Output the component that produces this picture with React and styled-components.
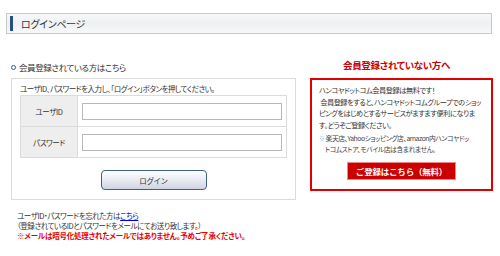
import React from "react";
import styled, { createGlobalStyle } from "styled-components";

const GlobalStyle = createGlobalStyle`
  body {
    margin: 0;
    background: #fff;
    font-family: "Noto Sans CJK JP", "Noto Sans", sans-serif;
    font-feature-settings: "palt";
    color: #333;
  }
`;

const Page = styled.div`
  width: 500px;
  height: 256px;
  padding-top: 13px;
  box-sizing: border-box;
  overflow: hidden;
`;

const PageHeader = styled.div`
  margin-left: 6px;
  width: 486px;
  height: 21px;
  box-sizing: border-box;
  border: 1px solid #c9c9c9;
  background: linear-gradient(#f7f8f9, #eef0f1 50%, #f6f8f9);
  display: flex;
  align-items: center;
  padding-left: 3px;
`;

const Accent = styled.span`
  width: 3px;
  height: 15px;
  background: #27507e;
  margin-right: 8px;
`;

const HeaderTitle = styled.h1`
  margin: 0;
  font-size: 10px;
  font-weight: normal;
  color: #2c3a4a;
  letter-spacing: -0.3px;
`;

const Columns = styled.div`
  display: grid;
  grid-template-columns: 285px 183px;
  column-gap: 14px;
  margin: 25px 0 0 11px;
  align-items: start;
`;

const Column = styled.div`
  display: flex;
  flex-direction: column;
`;

const SectionTitle = styled.div`
  display: flex;
  align-items: center;
  gap: 3px;
  height: 12px;
  margin-top: 2px;
  margin-bottom: 5px;
  font-size: 8.5px;
  color: #333;
  letter-spacing: -0.4px;
`;

const Bullet = styled.span`
  width: 3px;
  height: 3px;
  border: 1.5px solid #2a5b9a;
  border-radius: 50%;
`;

const LoginBox = styled.div`
  border: 1px solid #dcdcdc;
  padding: 4px 8px 9px;
  display: flex;
  flex-direction: column;
`;

const Small = styled.p`
  margin: 0;
  font-size: 7.5px;
  line-height: 12px;
  letter-spacing: -0.5px;
  white-space: nowrap;
`;

const Table = styled.div`
  border: 1px solid #dcdcdc;
  display: grid;
  grid-template-columns: 57px 1fr;
`;

const Label = styled.div`
  background: #eeeeee;
  height: 30px;
  display: flex;
  align-items: center;
  justify-content: center;
  font-size: 7.5px;
  letter-spacing: -0.4px;
  border-top: ${(p) => (p.first ? "none" : "1px solid #dcdcdc")};
  border-right: 1px solid #dcdcdc;
`;

const Field = styled.div`
  height: 30px;
  display: flex;
  align-items: center;
  padding: 0 4px;
  border-top: ${(p) => (p.first ? "none" : "1px solid #dcdcdc")};
`;

const Input = styled.input`
  width: 100%;
  height: 17px;
  box-sizing: border-box;
  border: 1px solid #b8b8b8;
  margin: 0;
  padding: 0;
`;

const LoginButton = styled.button`
  align-self: center;
  margin-top: 12px;
  width: 106px;
  height: 20px;
  border: 1px solid #3d5f8c;
  border-radius: 4px;
  background: linear-gradient(#ffffff, #e9ebf2 50%, #cfd3e2);
  font-family: inherit;
  font-size: 7.5px;
  color: #333;
  letter-spacing: -0.4px;
  padding: 0;
`;

const Notes = styled.div`
  margin-top: 11px;
  margin-left: 6px;
  font-size: 7.5px;
  line-height: 10px;
  letter-spacing: -0.45px;
  white-space: nowrap;
`;

const Link = styled.a`
  color: #0000ee;
  text-decoration: underline;
`;

const Warning = styled.div`
  color: #e60000;
  font-weight: bold;
  letter-spacing: -0.2px;
`;

const JoinTitle = styled.div`
  height: 12px;
  line-height: 12px;
  margin-bottom: 7px;
  text-align: center;
  padding-right: 10px;
  font-size: 9.5px;
  font-weight: bold;
  color: #cc0000;
  letter-spacing: -0.3px;
`;

const JoinBox = styled.div`
  border: 2px solid #e00000;
  padding: 5px 7px 9px;
  display: flex;
  flex-direction: column;
`;

const JoinText = styled.p`
  margin: 0;
  font-size: 7.2px;
  line-height: 11.5px;
  letter-spacing: -0.45px;
  white-space: nowrap;
`;

const JoinNote = styled.p`
  margin: 2px 0 0;
  font-size: 6.8px;
  line-height: 11px;
  letter-spacing: -0.45px;
  color: #444;
  white-space: nowrap;
  padding-left: 6px;
  text-indent: -6px;
`;

const Mark = styled.span`
  color: #aaa;
  font-size: 6px;
  margin-right: 1px;
`;

const JoinButton = styled.button`
  align-self: center;
  margin-top: 7px;
  width: 109px;
  height: 18px;
  border: 1px solid #e88;
  background: #cc0000;
  color: #fff;
  font-family: inherit;
  font-weight: bold;
  font-size: 8.5px;
  letter-spacing: -0.2px;
  padding: 0;
`;

export default function App() {
  return (
    <Page>
      <GlobalStyle />
      <PageHeader>
        <Accent />
        <HeaderTitle>ログインページ</HeaderTitle>
      </PageHeader>
      <Columns>
        <Column>
          <SectionTitle>
            <Bullet />
            会員登録されている方はこちら
          </SectionTitle>
          <LoginBox>
            <Small>ユーザID、パスワードを入力し、「ログイン」ボタンを押してください。</Small>
            <Table>
              <Label first>ユーザID</Label>
              <Field first>
                <Input type="text" />
              </Field>
              <Label>パスワード</Label>
              <Field>
                <Input type="password" />
              </Field>
            </Table>
            <LoginButton>ログイン</LoginButton>
          </LoginBox>
          <Notes>
            <div>
              ユーザID・パスワードを忘れた方は<Link href="#">こちら</Link>
            </div>
            <div>（登録されているIDとパスワードをメールにてお送り致します。）</div>
            <Warning>※メールは暗号化処理されたメールではありません。予めご了承ください。</Warning>
          </Notes>
        </Column>
        <Column>
          <JoinTitle>会員登録されていない方へ</JoinTitle>
          <JoinBox>
            <JoinText>
              ハンコヤドットコム会員登録は無料です！
              <br />
              &nbsp;会員登録をすると、ハンコヤドットコムグループでのショッ
              <br />
              ピングをはじめとするサービスがますます便利になりま
              <br />
              す。どうぞご登録ください。
            </JoinText>
            <JoinNote>
              <Mark>※</Mark>楽天店、Yahooショッピング店、amazon内ハンコヤドッ
              <br />
              トコムストア、モバイル店は含まれません。
            </JoinNote>
            <JoinButton>ご登録はこちら（無料）</JoinButton>
          </JoinBox>
        </Column>
      </Columns>
    </Page>
  );
}
